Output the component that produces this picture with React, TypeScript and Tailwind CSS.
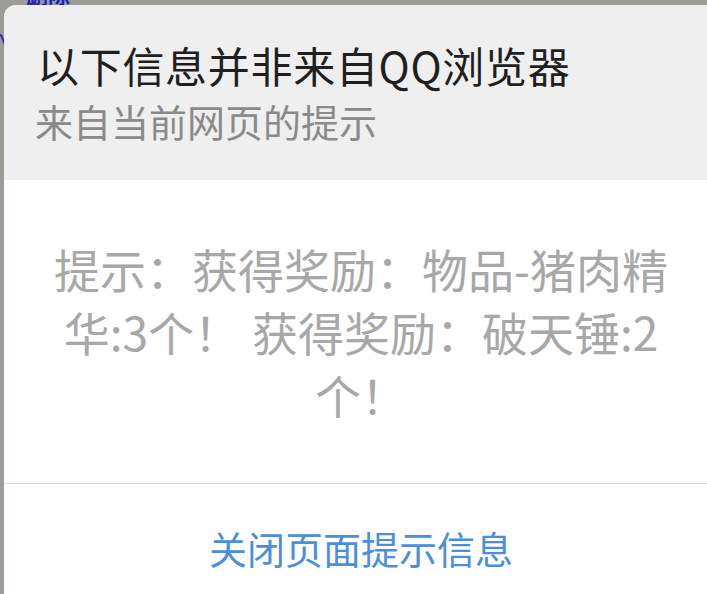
import React from "react";

const cjk = { fontFamily: '"Noto Sans CJK SC", "Noto Sans", sans-serif' };

export default function App() {
  return (
    <div
      className="relative w-[707px] h-[594px] overflow-hidden bg-[#9d9c97]"
      style={cjk}
    >
      {/* page behind the dialog */}
      <div className="flex flex-col text-[#1c22b8]">
        <div className="mt-[-19px] ml-[26px] text-[22px] leading-[24px] font-bold">
          删除
        </div>
        <div className="mt-[20px] ml-[-16px] text-[22px] leading-[24px]">
          小
        </div>
      </div>

      {/* dialog overlay */}
      <div className="absolute left-[4px] top-[5px] w-[714px] h-[620px] rounded-tl-[12px] overflow-hidden bg-white flex flex-col">
        <div className="h-[175px] bg-[#efefef] flex flex-col pl-[33px] pt-[32px]">
          <div className="text-[42px] leading-[56px] tracking-[0.7px] text-[#1f1f1f] whitespace-nowrap">
            以下信息并非来自QQ浏览器
          </div>
          <div className="text-[38px] leading-[56px] text-[#8a8a8a] whitespace-nowrap -ml-[2px]">
            来自当前网页的提示
          </div>
        </div>
        <div className="h-[303px] flex items-center justify-center">
          <p className="text-[46px] leading-[63px] text-[#a8a8a8] text-center whitespace-nowrap">
            提示：获得奖励：物品-猪肉精
            <br />
            华:3个！<span className="inline-block w-[12px]" />获得奖励：破天锤:2
            <br />
            个！
          </p>
        </div>
        <div className="h-px bg-[#dcdcdc]" />
        <div className="h-[128px] flex items-center justify-center">
          <span className="text-[38px] leading-[50px] text-[#4b8fdb]">
            关闭页面提示信息
          </span>
        </div>
      </div>
    </div>
  );
}
